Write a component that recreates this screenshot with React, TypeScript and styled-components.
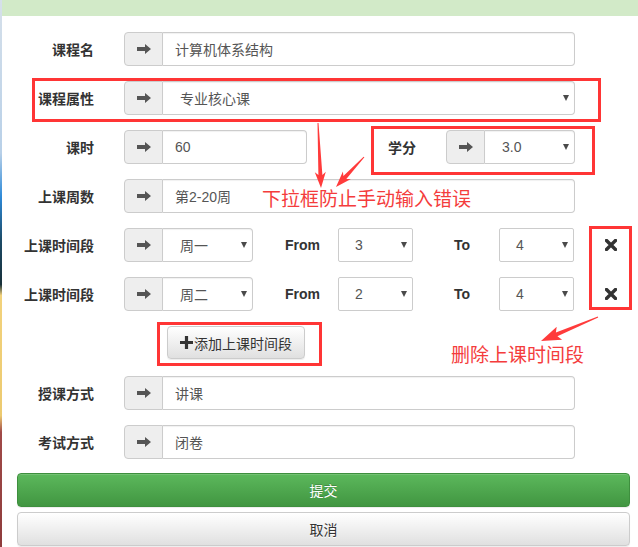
import React from 'react'
import styled, { createGlobalStyle } from 'styled-components'

const GlobalStyle = createGlobalStyle`
  html, body {
    margin: 0;
    padding: 0;
    background: #fff;
  }
  body {
    font-family: "Liberation Sans", "Noto Sans CJK SC", sans-serif;
    font-size: 14px;
    color: #333;
    overflow: hidden;
  }
  * { box-sizing: border-box; }
`

const Page = styled.div`
  position: relative;
  display: flex;
  width: 638px;
  height: 547px;
  overflow: hidden;
`

const Stripe = styled.div`
  width: 2px;
  flex-shrink: 0;
  background: linear-gradient(
    to bottom,
    #d6e0ea 0%,
    #b8d0e8 28%,
    #2e8ad8 36%,
    #1c4a66 44%,
    #18303a 52%,
    #f2d27c 54%,
    #ecca70 76%,
    #a04a48 79%,
    #8e3c3c 100%
  );
`

const Main = styled.div`
  flex: 1;
  display: flex;
  flex-direction: column;
`

const TopBand = styled.div`
  height: 16px;
  background: #d2eac8;
`

const Form = styled.div`
  display: flex;
  flex-direction: column;
  padding: 16px 8px 0 15px;
`

const Row = styled.div<{ $gap?: number }>`
  display: flex;
  align-items: center;
  height: 34px;
  margin-bottom: ${p => p.$gap ?? 15}px;
`

const ButtonRow = styled.div`
  display: flex;
  align-items: center;
  height: 33px;
  margin-bottom: 17px;
  padding-left: 150px;
`

const Label = styled.div`
  width: 77px;
  margin-right: 30px;
  flex-shrink: 0;
  text-align: right;
  font-weight: bold;
  color: #333;
  white-space: nowrap;
`

const InlineLabel = styled.div<{ $w: number; $pad: number }>`
  width: ${p => p.$w}px;
  padding-left: ${p => p.$pad}px;
  flex-shrink: 0;
  font-weight: bold;
  color: #333;
  white-space: nowrap;
`

const Group = styled.div<{ $w: number }>`
  display: flex;
  width: ${p => p.$w}px;
  height: 34px;
  flex-shrink: 0;
`

const Addon = styled.div`
  width: 39px;
  flex-shrink: 0;
  display: flex;
  align-items: center;
  justify-content: center;
  background: #eee;
  border: 1px solid #ccc;
  border-radius: 4px 0 0 4px;
  color: #555;
`

const Field = styled.div<{ $select?: boolean }>`
  flex: 1;
  display: flex;
  align-items: center;
  justify-content: space-between;
  border: 1px solid #ccc;
  border-left: 0;
  border-radius: 0 4px 4px 0;
  padding: 0 5px 0 ${p => (p.$select ? 17 : 12)}px;
  color: #555;
  white-space: nowrap;
  box-shadow: inset 0 1px 1px rgba(0, 0, 0, 0.06);
`

const Select = styled.div`
  width: 75px;
  height: 34px;
  flex-shrink: 0;
  display: flex;
  align-items: center;
  justify-content: space-between;
  border: 1px solid #ccc;
  border-radius: 2px;
  padding: 0 5px 0 16px;
  color: #555;
`

const Caret = styled.span`
  width: 0;
  height: 0;
  border-left: 3.5px solid transparent;
  border-right: 3.5px solid transparent;
  border-top: 6px solid #4a4a4a;
`

const RemoveCell = styled.div`
  margin-left: 31px;
  display: flex;
  align-items: center;
  color: #333;
`

const AddButton = styled.button`
  display: flex;
  align-items: center;
  height: 33px;
  padding: 0 12px;
  border: 1px solid #ccc;
  border-radius: 4px;
  background: linear-gradient(to bottom, #fff 0%, #e0e0e0 100%);
  font-family: inherit;
  font-size: 14px;
  color: #333;
  box-shadow: inset 0 1px 0 rgba(255, 255, 255, 0.15), 0 1px 1px rgba(0, 0, 0, 0.075);

  svg { margin-right: 1px; }
`

const BlockButton = styled.button<{ $primary?: boolean }>`
  display: block;
  width: 100%;
  height: 34px;
  border-radius: 4px;
  font-family: inherit;
  font-size: 14px;
  border: 1px solid ${p => (p.$primary ? '#3e8f3e' : '#ccc')};
  color: ${p => (p.$primary ? '#fff' : '#333')};
  background: ${p =>
    p.$primary
      ? 'linear-gradient(to bottom, #5cb85c 0%, #419641 100%)'
      : 'linear-gradient(to bottom, #fff 0%, #e0e0e0 100%)'};
  text-shadow: ${p => (p.$primary ? '0 -1px 0 rgba(0,0,0,0.2)' : '0 1px 0 #fff')};
  box-shadow: inset 0 1px 0 rgba(255, 255, 255, 0.15), 0 1px 1px rgba(0, 0, 0, 0.075);

  & + & { margin-top: 5px; }
`

// annotations drawn on top of the screenshot
const Overlay = styled.div`
  position: absolute;
  inset: 0;
  pointer-events: none;
`

const Note = styled.span<{ $top: number; $left: number }>`
  position: absolute;
  top: ${p => p.$top}px;
  left: ${p => p.$left}px;
  font-family: "Noto Sans CJK SC", sans-serif;
  font-size: 19px;
  line-height: 22px;
  color: #f43c3c;
  white-space: nowrap;
`

const AnnoSvg = styled.svg`
  position: absolute;
  top: 0;
  left: 0;
`

const ArrowIcon = () => (
  <svg width="14" height="10" viewBox="0 0 14 10">
    <path d="M0 3 H8 V0 L14 5 L8 10 V7 H0 Z" fill="#555" />
  </svg>
)

const RemoveIcon = () => (
  <svg width="12" height="12" viewBox="0 0 12 12">
    <path d="M1.5 1.5 L10.5 10.5 M10.5 1.5 L1.5 10.5" stroke="#333" strokeWidth="3.4" strokeLinecap="square" />
  </svg>
)

const PlusIcon = () => (
  <svg width="13" height="13" viewBox="0 0 13 13">
    <path d="M6.5 0 V13 M0 6.5 H13" stroke="#333" strokeWidth="3.2" />
  </svg>
)

function arrowPoints(x1: number, y1: number, x2: number, y2: number, headLen: number, headW: number) {
  const len = Math.hypot(x2 - x1, y2 - y1)
  const dx = (x2 - x1) / len
  const dy = (y2 - y1) / len
  const nx = -dy
  const ny = dx
  const neckX = x2 - dx * headLen
  const neckY = y2 - dy * headLen
  const barbX = x2 - dx * (headLen + 3)
  const barbY = y2 - dy * (headLen + 3)
  const pts: [number, number][] = [
    [x1 + nx * 0.5, y1 + ny * 0.5],
    [neckX + nx * 2, neckY + ny * 2],
    [barbX + nx * headW / 2, barbY + ny * headW / 2],
    [x2, y2],
    [barbX - nx * headW / 2, barbY - ny * headW / 2],
    [neckX - nx * 2, neckY - ny * 2],
    [x1 - nx * 0.5, y1 - ny * 0.5]
  ]
  return pts.map(p => p.map(v => v.toFixed(1)).join(',')).join(' ')
}

const boxes = [
  { x: 33.5, y: 79.5, w: 566, h: 41 },
  { x: 372.5, y: 127.5, w: 221, h: 46 },
  { x: 590.5, y: 227.5, w: 40, h: 81 },
  { x: 158.5, y: 323.5, w: 162, h: 41 }
]

const arrows = [
  arrowPoints(318, 123, 321, 188, 13, 11),
  arrowPoints(364, 157, 336, 187, 13, 11),
  arrowPoints(598, 317, 541, 341, 17, 14)
]

const InputRow = ({ label, value, select }: { label: string; value: string; select?: boolean }) => (
  <Row>
    <Label>{label}</Label>
    <Group $w={451}>
      <Addon><ArrowIcon /></Addon>
      <Field $select={select}>
        <span>{value}</span>
        {select && <Caret />}
      </Field>
    </Group>
  </Row>
)

const PeriodRow = ({ day, from, to }: { day: string; from: string; to: string }) => (
  <Row>
    <Label>上课时间段</Label>
    <Group $w={129}>
      <Addon><ArrowIcon /></Addon>
      <Field $select>
        <span>{day}</span>
        <Caret />
      </Field>
    </Group>
    <InlineLabel $w={85} $pad={32}>From</InlineLabel>
    <Select>
      <span>{from}</span>
      <Caret />
    </Select>
    <InlineLabel $w={86} $pad={41}>To</InlineLabel>
    <Select>
      <span>{to}</span>
      <Caret />
    </Select>
    <RemoveCell><RemoveIcon /></RemoveCell>
  </Row>
)

function App() {
  return (
    <Page>
      <GlobalStyle />
      <Stripe />
      <Main>
        <TopBand />
        <Form>
          <InputRow label="课程名" value="计算机体系结构" />
          <InputRow label="课程属性" value="专业核心课" select />
          <Row>
            <Label>课时</Label>
            <Group $w={183}>
              <Addon><ArrowIcon /></Addon>
              <Field><span>60</span></Field>
            </Group>
            <InlineLabel $w={139} $pad={81}>学分</InlineLabel>
            <Group $w={129}>
              <Addon><ArrowIcon /></Addon>
              <Field $select>
                <span>3.0</span>
                <Caret />
              </Field>
            </Group>
          </Row>
          <InputRow label="上课周数" value="第2-20周" />
          <PeriodRow day="周一" from="3" to="4" />
          <PeriodRow day="周二" from="2" to="4" />
          <ButtonRow>
            <AddButton type="button">
              <PlusIcon />
              添加上课时间段
            </AddButton>
          </ButtonRow>
          <InputRow label="授课方式" value="讲课" />
          <Row $gap={14}>
            <Label>考试方式</Label>
            <Group $w={451}>
              <Addon><ArrowIcon /></Addon>
              <Field><span>闭卷</span></Field>
            </Group>
          </Row>
          <BlockButton $primary type="button">提交</BlockButton>
          <BlockButton type="button">取消</BlockButton>
        </Form>
      </Main>
      <Overlay>
        <AnnoSvg width="638" height="547">
          {boxes.map((b, i) => (
            <rect key={i} x={b.x} y={b.y} width={b.w} height={b.h} fill="none" stroke="#ff3535" strokeWidth="3" />
          ))}
          {arrows.map((a, i) => (
            <polygon key={i} points={a} fill="#ff3b3b" />
          ))}
        </AnnoSvg>
        <Note $top={187} $left={262}>下拉框防止手动输入错误</Note>
        <Note $top={343} $left={451}>删除上课时间段</Note>
      </Overlay>
    </Page>
  )
}

export default App
